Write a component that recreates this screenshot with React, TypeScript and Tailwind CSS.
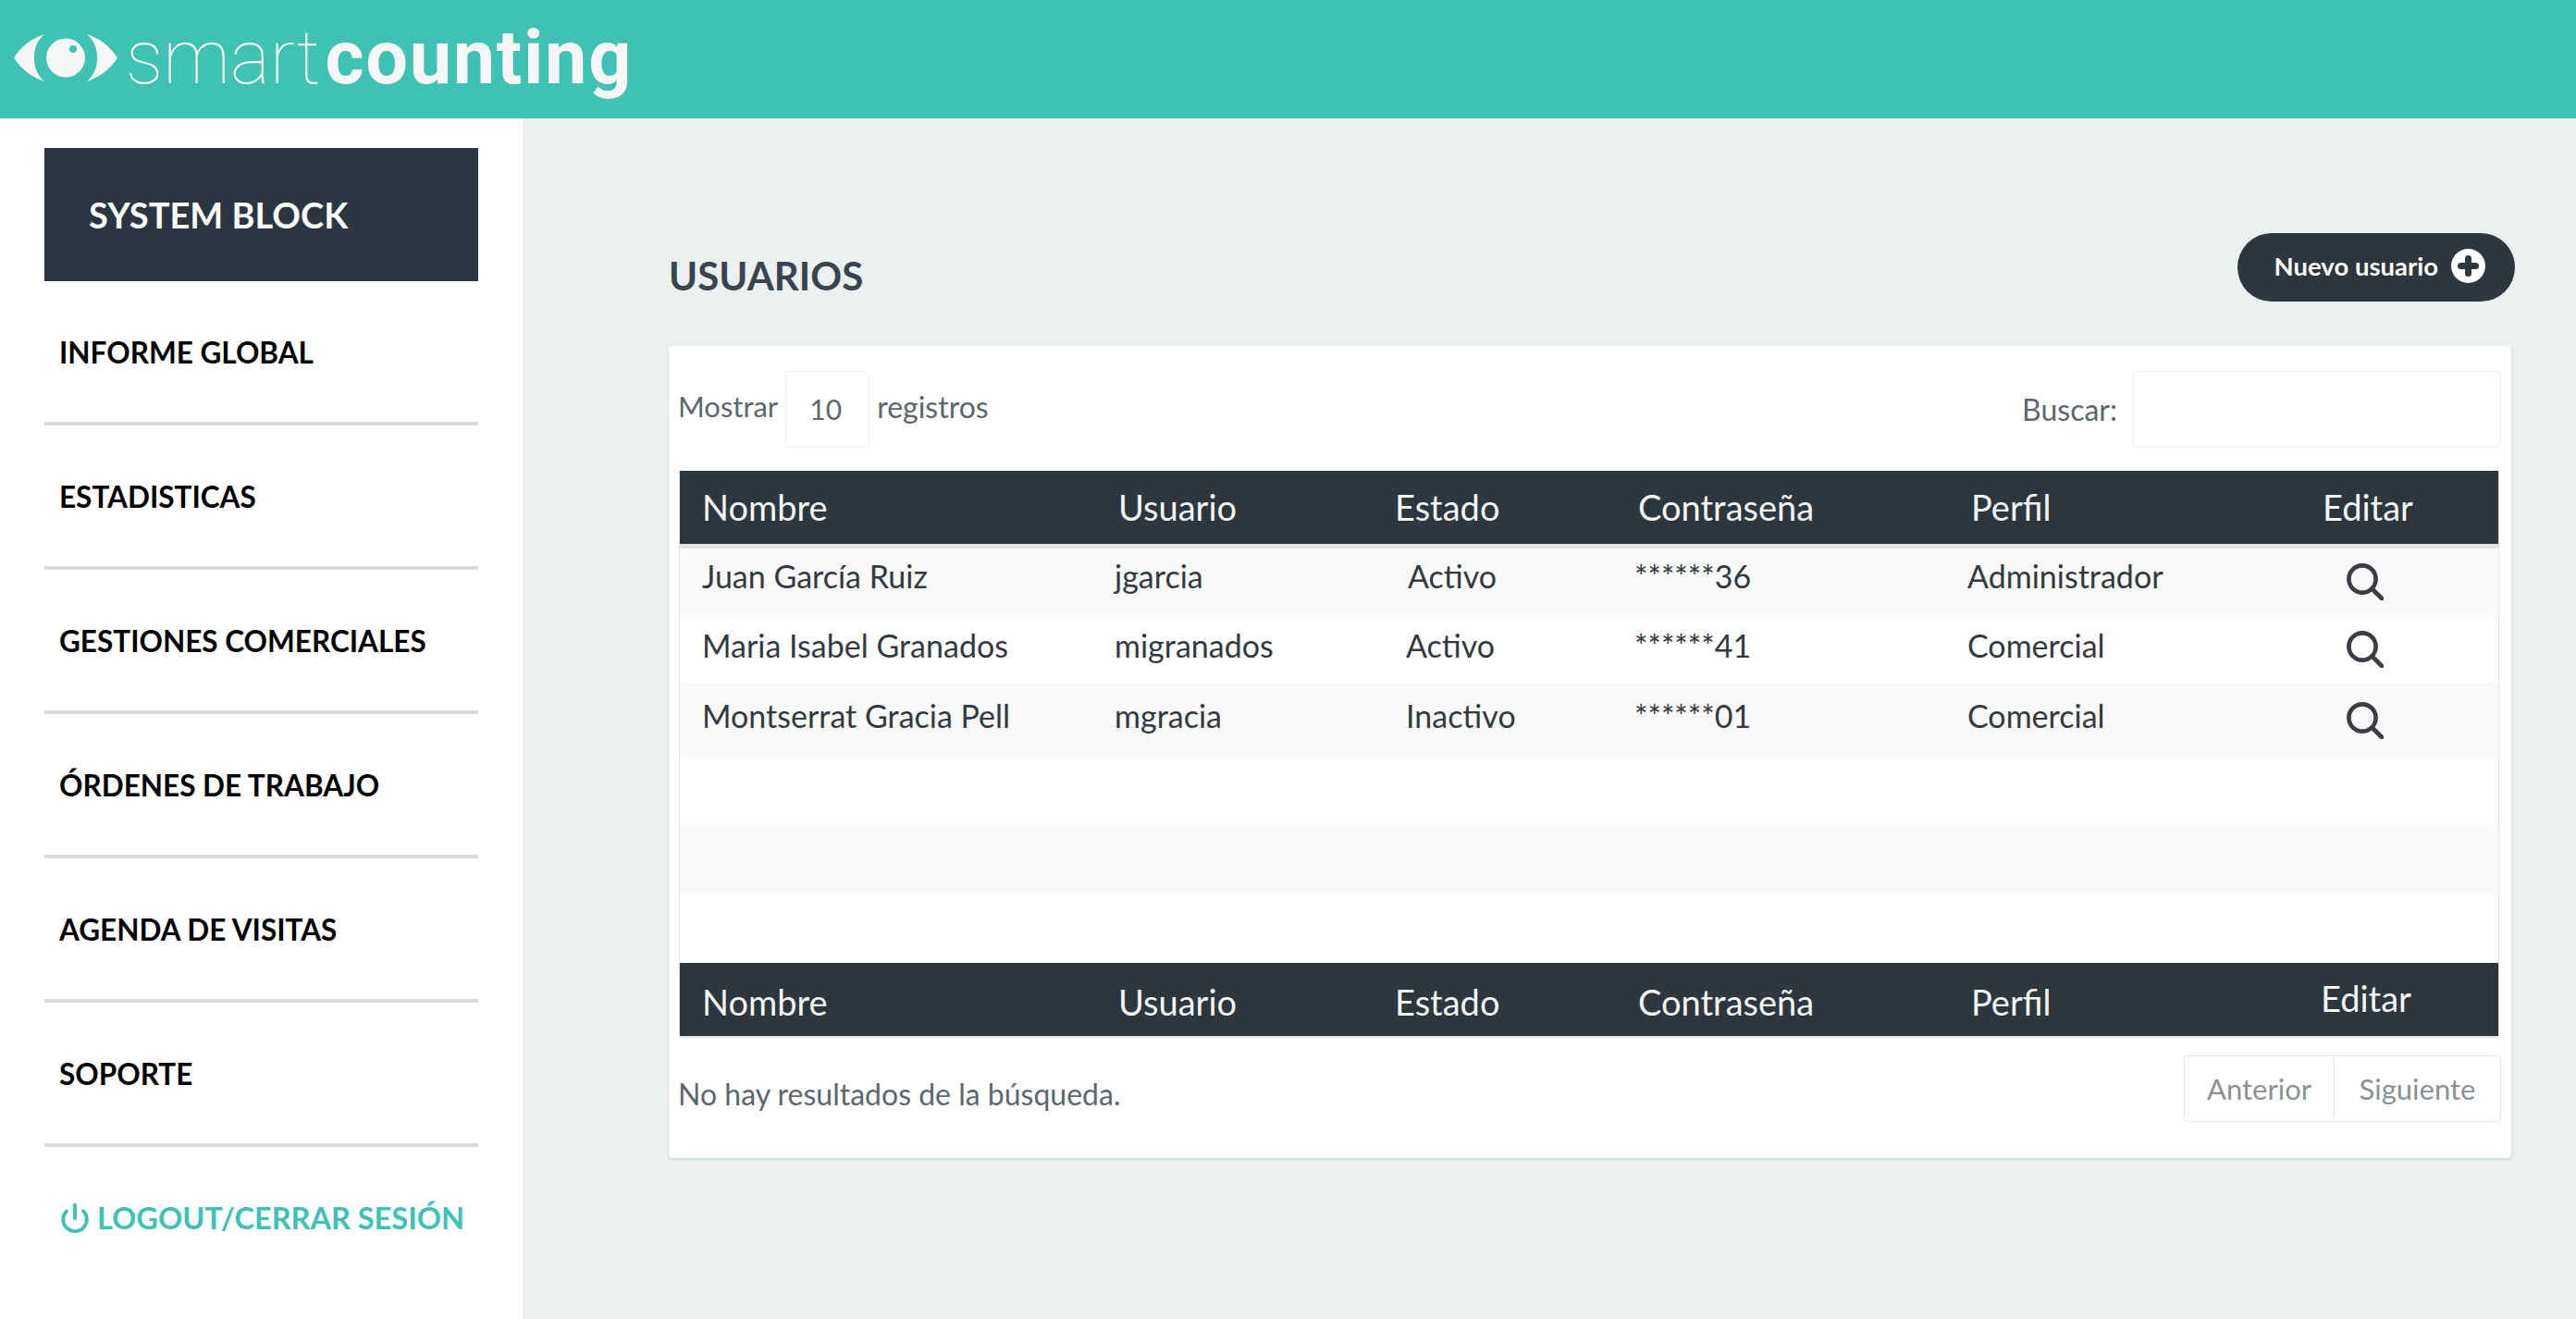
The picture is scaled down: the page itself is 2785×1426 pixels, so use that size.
import React from "react";
import { Power } from "lucide-react";

const menu = ["INFORME GLOBAL", "ESTADISTICAS", "GESTIONES COMERCIALES", "ÓRDENES DE TRABAJO", "AGENDA DE VISITAS", "SOPORTE"];

const users = [
  { nombre: "Juan García Ruiz", usuario: "jgarcia", estado: "Activo", pad: "pl-[14px]", pass: "******36", perfil: "Administrador", h: "h-[72px]", nudge: "pb-[14px]" },
  { nombre: "Maria Isabel Granados", usuario: "migranados", estado: "Activo", pad: "pl-[12px]", pass: "******41", perfil: "Comercial", h: "h-[73px]", nudge: "pb-[8px]" },
  { nombre: "Montserrat Gracia Pell", usuario: "mgracia", estado: "Inactivo", pad: "pl-[12px]", pass: "******01", perfil: "Comercial", h: "h-[81px]", nudge: "pb-[10px]" },
];

const cols = "grid grid-cols-[470px_303px_259px_360px_1fr] items-center";

function Logo() {
  return (
    <svg viewBox="0 0 112 51" className="h-[51px] w-[112px] shrink-0 -mt-1" fill="#f6f6f6">
      <path d="M0 25.5C8 13 20 4 33 0C24 8 22 17 22 25.5C22 34 24 43 33 51C20 47 8 38 0 25.5Z" />
      <path d="M112 25.5C104 13 92 4 79 0C88 8 90 17 90 25.5C90 34 88 43 79 51C92 47 104 38 112 25.5Z" />
      <circle cx="56" cy="25.5" r="21" />
      <circle cx="64" cy="16" r="4" fill="#3fc1b3" />
    </svg>
  );
}

function SearchIcon() {
  return (
    <svg viewBox="0 0 20 20" className="h-10 w-10" fill="none" stroke="#383e44" strokeWidth="2.3" strokeLinecap="round">
      <circle cx="8.5" cy="8.5" r="7.3" />
      <path d="M14 14l5 5" />
    </svg>
  );
}

function HeadRow({ className, editar }: { className: string; editar: string }) {
  return (
    <div className={`${cols} bg-[#2e363e] text-[#f4f6f6] text-[38px] ${className}`}>
      <span className="pl-[24px]">Nombre</span>
      <span className="pl-1">Usuario</span>
      <span>Estado</span>
      <span className="pl-1">Contraseña</span>
      <div className="grid grid-cols-[384px_1fr]">
        <span className="pl-1">Perfil</span>
        <span className={editar}>Editar</span>
      </div>
    </div>
  );
}

export default function App() {
  return (
    <div className="h-screen flex flex-col overflow-hidden bg-[#ebf0f0] font-['Lato',sans-serif]">
      <header className="h-32 shrink-0 bg-[#3fc1b3] flex items-center pl-[15px] gap-[9px]">
        <Logo />
        <div className="text-[#f6f6f6] text-[81px] leading-none -mt-1 flex font-['Roboto',sans-serif]">
          <span className="font-thin">smart</span>
          <span className="font-bold ml-[5px] tracking-[1.7px]">counting</span>
        </div>
      </header>

      <div className="flex flex-1 min-h-0">
        <aside className="w-[565px] shrink-0 bg-white pt-8 px-12">
          <div className="h-36 bg-[#2c3640] text-white text-[38px] font-bold flex items-center pl-[48px]">SYSTEM BLOCK</div>
          {menu.map((m) => (
            <div key={m} className="h-[156px] border-b-4 border-[#dcdcdc] flex items-center pl-4 pt-[3px] text-[31.5px] font-bold text-black">
              {m}
            </div>
          ))}
          <div className="h-[154px] flex items-center pl-4 text-[32.5px] font-bold text-[#3fc1b3] gap-[7px]">
            <Power size={34} strokeWidth={2.8} />
            <span>LOGOUT/CERRAR SESIÓN</span>
          </div>
        </aside>

        <main className="flex-1 pt-[124px] pl-[158px] pr-[70px]">
          <div className="flex items-center justify-between h-[74px] mb-12 -mr-1">
            <h1 className="text-[42px] font-bold text-[#3a444e] pt-[18px]">USUARIOS</h1>
            <button className="h-[74px] w-[300px] pb-[3px] rounded-full bg-[#2e363e] text-white font-bold text-[27.5px] flex items-center justify-end pr-8 gap-[14px]">
              Nuevo usuario
              <svg viewBox="0 0 37 37" className="h-[37px] w-[37px]">
                <circle cx="18.5" cy="18.5" r="18.5" fill="#fff" />
                <path d="M18.5 10.5v16M10.5 18.5h16" stroke="#2e363e" strokeWidth="7" strokeLinecap="round" />
              </svg>
            </button>
          </div>

          <section className="bg-white rounded shadow-[0_1px_3px_rgba(0,0,0,0.18)] pt-[27px] pb-[39px] pl-[10px] pr-[11px] text-[#5d666d] text-[32px]">
            <div className="flex justify-between h-[83px]">
              <div className="flex items-center gap-[8px]">
                <span className="-mt-1.5 text-[31px]">Mostrar</span>
                <div className="w-[91px] h-[83px] border border-[#eeeeee] rounded flex items-center justify-center text-[30px] pr-1">10</div>
                <span className="-mt-1.5">registros</span>
              </div>
              <div className="flex items-center gap-[17px]">
                <span>Buscar:</span>
                <div className="w-[398px] h-[83px] border border-[#eeeeee] rounded" />
              </div>
            </div>

            <div className="mt-[25px] ml-px mr-[2px] border-x border-[#e4e6e7]">
              <HeadRow className="h-[79px] border-b-[5px] border-[#dfe2e4] box-content" editar="" />
              {users.map((u) => (
                <div key={u.usuario} className={`${cols} ${u.h} text-[#33393f] even:bg-[#f9f9f9] bg-white text-[34px]`}>
                  <span className={`pl-[24px] ${u.nudge}`}>{u.nombre}</span>
                  <span className={u.nudge}>{u.usuario}</span>
                  <span className={`${u.pad} ${u.nudge}`}>{u.estado}</span>
                  <span className={u.nudge}>{u.pass}</span>
                  <div className="grid grid-cols-[410px_1fr] items-center">
                    <span className={u.nudge}>{u.perfil}</span>
                    <SearchIcon />
                  </div>
                </div>
              ))}
              <div className="h-[72px] bg-white" />
              <div className="h-[76px] bg-[#f9f9f9]" />
              <div className="h-[74px] bg-white" />
              <HeadRow className="h-[79px] pt-[5px] shadow-[0_2px_2px_rgba(0,0,0,0.15)]" editar="-ml-0.5 -mt-1" />
            </div>

            <div className="flex justify-between mt-[21px] h-[72px]">
              <span className="pt-[26px] leading-none">No hay resultados de la búsqueda.</span>
              <div className="flex border border-[#e6e6e6] rounded text-[#8a9095] text-[31px]">
                <div className="w-[162px] flex items-center justify-center border-r border-[#e6e6e6]">Anterior</div>
                <div className="w-[179px] flex items-center justify-center">Siguiente</div>
              </div>
            </div>
          </section>
        </main>
      </div>
    </div>
  );
}
